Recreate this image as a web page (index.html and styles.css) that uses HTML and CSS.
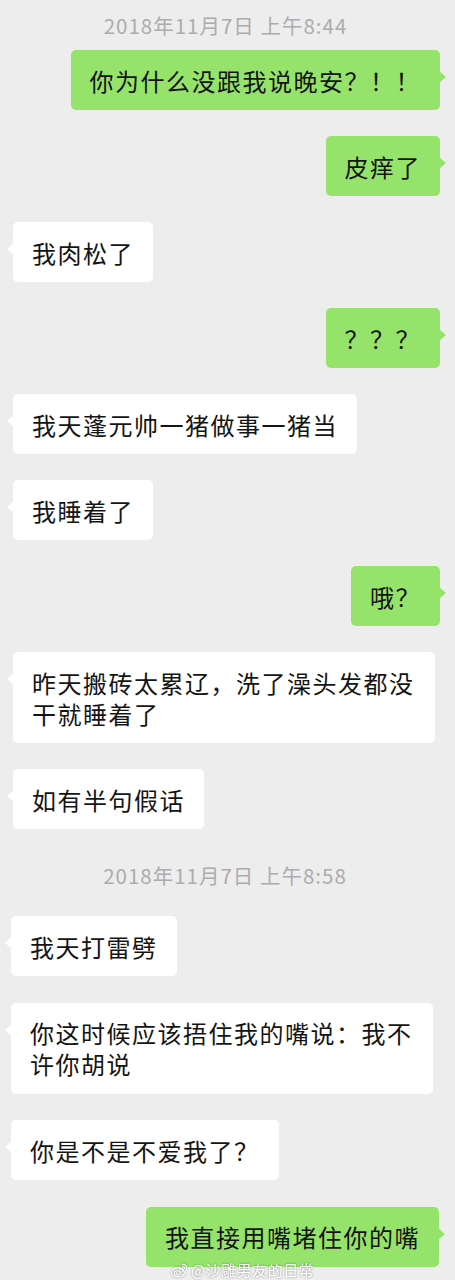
FILE: index.html
```html
<!DOCTYPE html>
<html lang="zh-CN">
<head>
<meta charset="utf-8">
<title>微信聊天</title>
<link rel="stylesheet" href="styles.css">
</head>
<body>
<main class="chat">
  <section class="part part-1">
    <div class="time time-first">2018年11月7日 上午8:44</div>
    <div class="row row-me"><div class="bubble me">你为什么没跟我说晚安？！！</div></div>
    <div class="row row-me"><div class="bubble me">皮痒了</div></div>
    <div class="row"><div class="bubble other">我肉松了</div></div>
    <div class="row row-me"><div class="bubble me">？？？</div></div>
    <div class="row"><div class="bubble other">我天蓬元帅一猪做事一猪当</div></div>
    <div class="row"><div class="bubble other">我睡着了</div></div>
    <div class="row row-me"><div class="bubble me">哦？</div></div>
    <div class="row"><div class="bubble other">昨天搬砖太累辽，洗了澡头发都没干就睡着了</div></div>
    <div class="row"><div class="bubble other">如有半句假话</div></div>
  </section>
  <section class="part part-2">
    <div class="time">2018年11月7日 上午8:58</div>
    <div class="row"><div class="bubble other">我天打雷劈</div></div>
    <div class="row"><div class="bubble other">你这时候应该捂住我的嘴说：我不许你胡说</div></div>
    <div class="row"><div class="bubble other">你是不是不爱我了？</div></div>
    <div class="row row-me"><div class="bubble me">我直接用嘴堵住你的嘴</div></div>
  </section>
  <div class="watermark">
    <svg class="weibo" viewBox="0 0 20 16" width="19" height="15" aria-hidden="true">
      <path d="M8.2 5.2c-3.3.4-6.6 2.7-6.6 5.2 0 2.4 2.9 4.2 6.6 4.2 4.2 0 7.3-2.2 7.3-4.4 0-1.4-1.3-1.900-2.2-2.1.6-1 .6-2.300-1-2.200-1 .1-1.8.5-1.8.5.3-1.300-.3-1.700-2.300-1.200z" fill="none" stroke="#fff" stroke-width="1.3"/>
      <ellipse cx="7.6" cy="10.6" rx="3.2" ry="2.3" fill="none" stroke="#fff" stroke-width="1.1"/>
      <circle cx="7.2" cy="10.8" r="0.9" fill="#fff"/>
      <path d="M13.2 1.6c2.6-.4 5 1.6 4.4 4.6" fill="none" stroke="#fff" stroke-width="1.3" stroke-linecap="round"/>
      <path d="M13.4 3.8c1.2-.2 2.2.7 2 1.9" fill="none" stroke="#fff" stroke-width="1.1" stroke-linecap="round"/>
    </svg>
    <span class="wm-text">@沙雕男友的日常</span>
  </div>
</main>
</body>
</html>
```

FILE: styles.css
```css
html, body {
  margin: 0;
  padding: 0;
}

body {
  background: #ededed;
  font-family: "Noto Sans CJK SC", "Noto Sans", sans-serif;
  color: #141414;
  width: 455px;
  height: 1280px;
  overflow: hidden;
}

.chat {
  position: relative;
  height: 1280px;
}

.part {
  display: flex;
  flex-direction: column;
}

.part-1 {
  padding: 10px 15px 0 13px;
}

.part-2 {
  padding: 0 16px 0 11px;
}

.time {
  text-align: center;
  font-size: 20.5px;
  line-height: 30px;
  letter-spacing: 1px;
  color: #acacac;
  margin: 5px 0 26px;
}

.time-first {
  margin: 0 0 10px;
  padding-right: 2px;
}

.row {
  display: flex;
  margin-bottom: 26px;
}

.part-2 .row {
  margin-bottom: 26.5px;
}

.row-me {
  justify-content: flex-end;
}

.bubble {
  position: relative;
  max-width: 422px;
  box-sizing: border-box;
  padding: 14.5px 19px 14.5px 19px;
  font-size: 24px;
  line-height: 31px;
  letter-spacing: 1.5px;
  border-radius: 5px;
  word-break: break-all;
}

.bubble::before {
  content: "";
  position: absolute;
  top: 21px;
  width: 0;
  height: 0;
  border-top: 6px solid transparent;
  border-bottom: 6px solid transparent;
}

.other {
  background: #ffffff;
}

.other::before {
  left: -6px;
  border-right: 7px solid #ffffff;
}

.me {
  background: #95e36b;
}

.me::before {
  right: -6px;
  border-left: 7px solid #95e36b;
}

.watermark {
  position: absolute;
  left: 170px;
  top: 1261px;
  display: flex;
  align-items: center;
  gap: 2px;
  opacity: 0.9;
  filter: drop-shadow(0 0 1px rgba(0, 0, 0, 0.45));
}

.weibo {
  display: block;
}

.wm-text {
  font-size: 15px;
  line-height: 18px;
  color: #ffffff;
  letter-spacing: 0.5px;
}
```
